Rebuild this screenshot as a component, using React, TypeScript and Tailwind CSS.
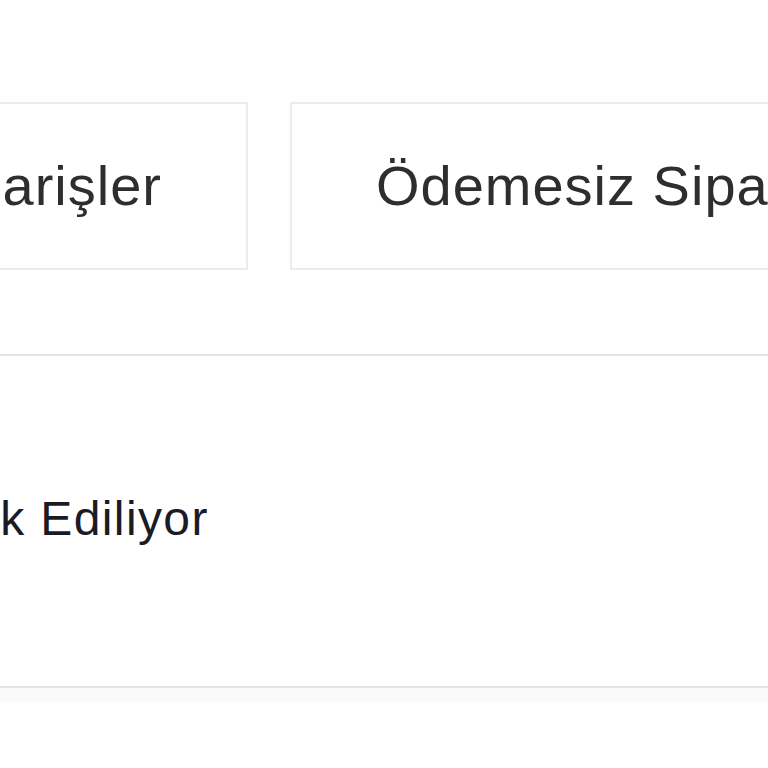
import React from 'react';

const tabs = ['Tüm Siparişler', 'Ödemesiz Siparişler'];

export default function App() {
  return (
    <div className="w-[768px] h-[768px] overflow-hidden bg-white font-['Liberation_Sans',Arial,sans-serif]">
      {/* order tabs */}
      <div className="pt-[102px] flex gap-[42px] ml-[-299px] w-max">
        {tabs.map((t) => (
          <div
            key={t}
            className="h-[168px] px-[84px] flex items-center border-2 border-[#ececec] text-[56px] tracking-[1px] text-[#2e2e2e] whitespace-nowrap"
          >
            {t}
          </div>
        ))}
      </div>

      {/* status row */}
      <div className="mt-[84px] border-t-2 border-b-2 border-[#e4e4e4] h-[334px] flex items-center">
        <div className="ml-[-139px] text-[48px] tracking-[1.4px] text-[#1b1b25] whitespace-nowrap pb-[4px]">
          Tedarik Ediliyor
        </div>
      </div>
      <div className="h-[14px] bg-[#fafafa]" />
    </div>
  );
}
